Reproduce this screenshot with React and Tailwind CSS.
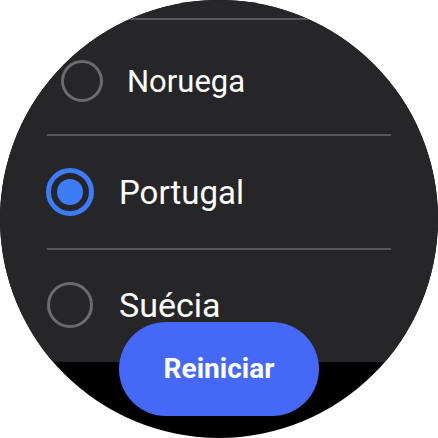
export default function App() {
  const font = { fontFamily: "Roboto, 'Noto Sans', sans-serif" };
  return (
    <div className="w-[438px] h-[438px] bg-white">
      <div className="relative w-[438px] h-[438px] rounded-full overflow-hidden bg-black" style={font}>
        <div className="h-[362px] bg-[#262628] flex flex-col">
          <div className="h-[18px] shrink-0" />
          <div className="h-[2px] ml-[47px] w-[344px] bg-[#58585a] shrink-0" />
          <div className="h-[114px] shrink-0 flex items-center pt-[8px]">
            <div className="ml-[61px] w-[42px] h-[42px] rounded-full border-[3px] border-[#6b6b6d] shrink-0" />
            <span className="ml-[24px] text-[31px] leading-none text-white">Noruega</span>
          </div>
          <div className="h-[2px] ml-[47px] w-[344px] bg-[#58585a] shrink-0" />
          <div className="h-[112px] shrink-0 flex items-center">
            <div className="ml-[46px] w-[48px] h-[48px] rounded-full border-[5px] border-[#3d7cf7] flex items-center justify-center shrink-0">
              <div className="w-[26px] h-[26px] rounded-full bg-[#3d7cf7]" />
            </div>
            <span className="ml-[25px] text-[33px] leading-none text-white">Portugal</span>
          </div>
          <div className="h-[2px] ml-[47px] w-[344px] bg-[#58585a] shrink-0" />
          <div className="h-[110px] shrink-0 flex items-center">
            <div className="ml-[47px] w-[46px] h-[46px] rounded-full border-[3px] border-[#6b6b6d] shrink-0" />
            <span className="ml-[26px] text-[34px] leading-none text-white">Suécia</span>
          </div>
        </div>
        <button className="absolute left-[119px] top-[322px] w-[200px] h-[94px] rounded-full bg-[#4569f6] text-white text-[28px] font-bold flex items-center justify-center">
          Reiniciar
        </button>
      </div>
    </div>
  );
}
